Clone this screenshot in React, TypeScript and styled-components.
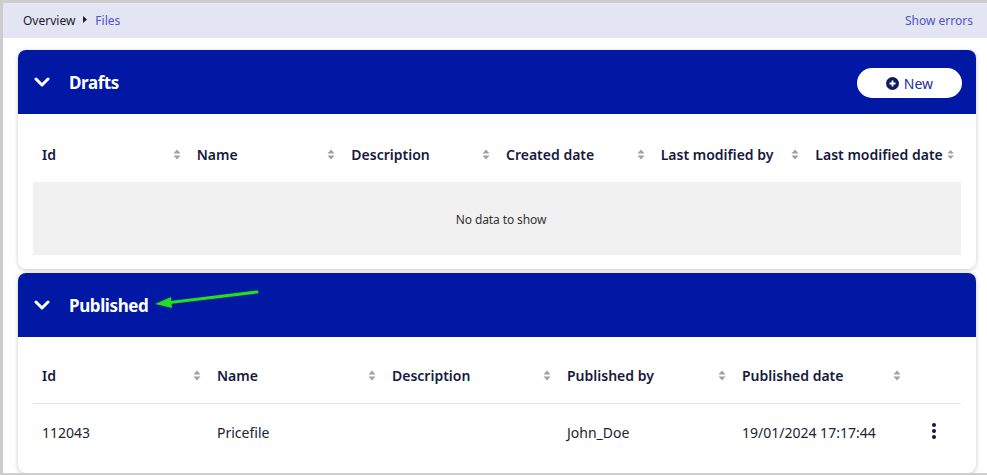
import React from "react";
import styled, { createGlobalStyle } from "styled-components";

const GlobalStyle = createGlobalStyle`
  html, body { margin: 0; padding: 0; background: #cdcdcd; }
  body { font-family: "Noto Sans", "Open Sans", sans-serif; }
  * { box-sizing: border-box; }
`;

const Frame = styled.div`
  margin: 3px 0 0 3px;
  height: 470px;
  background: #ffffff;
  display: flex;
  flex-direction: column;
  overflow: hidden;
`;

const Breadcrumbs = styled.div`
  height: 35px;
  background: #e3e5f3;
  display: flex;
  align-items: center;
  justify-content: space-between;
  padding: 0 14px 0 20px;
  font-size: 12px;
`;

const Crumbs = styled.div`
  display: flex;
  align-items: center;
  gap: 8px;
`;

const Crumb = styled.span<{ $active?: boolean }>`
  color: ${(p) => (p.$active ? "#4b55c9" : "#1c1c2c")};
`;

const CrumbSep = styled.svg`
  width: 4px;
  height: 7px;
  margin-bottom: 2px;
`;

const LinkText = styled.span`
  color: #4b55c9;
`;

const Content = styled.div`
  padding: 12px 11px 0 15px;
  display: flex;
  flex-direction: column;
  gap: 4px;
`;

const Card = styled.section`
  background: #fff;
  border-radius: 8px;
  box-shadow: 0 1px 4px rgba(0, 0, 0, 0.22);
  overflow: hidden;
`;

const CardHeader = styled.header`
  position: relative;
  height: 64px;
  background: #0018a3;
  display: flex;
  align-items: center;
  padding: 0 14px 0 16px;
  color: #fff;
`;

const Chevron = styled.svg`
  width: 16px;
  height: 10px;
  margin-right: 19px;
`;

const Title = styled.h2`
  margin: 0;
  font-size: 17px;
  font-weight: 700;
  flex: 1;
  letter-spacing: -0.4px;
`;

const NewButton = styled.button`
  height: 30px;
  width: 105px;
  border: none;
  border-radius: 15px;
  background: #fff;
  color: #1f2d9c;
  font-family: inherit;
  font-size: 14px;
  display: flex;
  align-items: center;
  justify-content: center;
  gap: 5px;
  padding: 0;
  margin-top: 2px;
  cursor: pointer;
`;

const CardBody = styled.div<{ $top: number; $bottom: number }>`
  padding: ${(p) => p.$top}px 15px ${(p) => p.$bottom}px;
`;

const GridRow = styled.div<{ $cols: string; $border?: boolean }>`
  display: grid;
  grid-template-columns: ${(p) => p.$cols};
  height: 56px;
  align-items: center;
  border-bottom: ${(p) => (p.$border ? "1px solid #e3e3e3" : "none")};
`;

const HeadCell = styled.div`
  display: flex;
  align-items: center;
  justify-content: space-between;
  gap: 4px;
  padding: 0 7px 0 9px;
  font-size: 14px;
  font-weight: 600;
  color: #161a3d;
  white-space: nowrap;
  min-width: 0;
`;

const Cell = styled.div<{ $center?: boolean }>`
  padding: 0 9px;
  font-size: 14px;
  color: #22232e;
  white-space: nowrap;
  display: flex;
  justify-content: ${(p) => (p.$center ? "center" : "flex-start")};
`;

const Empty = styled.div`
  height: 73px;
  background: #f1f1f1;
  display: flex;
  align-items: center;
  justify-content: center;
  padding: 2px 0 0 8px;
  font-size: 12px;
  letter-spacing: -0.1px;
  color: #333;
`;

const Kebab = styled.div`
  display: flex;
  flex-direction: column;
  gap: 2px;
  margin: -2px 0 0 -1px;
`;

const Dot = styled.span`
  width: 4px;
  height: 4px;
  border-radius: 50%;
  background: #101846;
`;

const Annotation = styled.svg`
  position: absolute;
  left: 112px;
  top: 10px;
  width: 130px;
  height: 30px;
  pointer-events: none;
`;

const SortIcon = () => (
  <svg width="8" height="11" viewBox="0 0 8 11">
    <path d="M4 0.5 L7.5 4.5 H0.5 Z" fill="#a0a0a0" />
    <path d="M4 10.5 L7.5 6.5 H0.5 Z" fill="#a0a0a0" />
  </svg>
);

const ChevronIcon = () => (
  <Chevron viewBox="0 0 16 10">
    <path d="M2 2 L8 8 L14 2" fill="none" stroke="#fff" strokeWidth="3" strokeLinecap="round" strokeLinejoin="round" />
  </Chevron>
);

const PlusCircle = () => (
  <svg width="13" height="13" viewBox="0 0 13 13">
    <circle cx="6.5" cy="6.5" r="6.5" fill="#101a5c" />
    <path d="M6.5 3.5 V9.5 M3.5 6.5 H9.5" stroke="#fff" strokeWidth="1.8" />
  </svg>
);

const draftCols = ["Id", "Name", "Description", "Created date", "Last modified by", "Last modified date"];
const pubCols = ["Id", "Name", "Description", "Published by", "Published date"];
const pubTemplate = "repeat(5, 175px) 1fr";

export default function App() {
  return (
    <>
      <GlobalStyle />
      <Frame>
        <Breadcrumbs>
          <Crumbs>
            <Crumb>Overview</Crumb>
            <CrumbSep viewBox="0 0 4 7">
              <path d="M0 0 L4 3.5 L0 7 Z" fill="#1c1c2c" />
            </CrumbSep>
            <Crumb $active>Files</Crumb>
          </Crumbs>
          <LinkText>Show errors</LinkText>
        </Breadcrumbs>
        <Content>
          <Card>
            <CardHeader>
              <ChevronIcon />
              <Title>Drafts</Title>
              <NewButton>
                <PlusCircle />
                New
              </NewButton>
            </CardHeader>
            <CardBody $top={12} $bottom={14}>
              <GridRow $cols="repeat(6, 1fr)">
                {draftCols.map((c) => (
                  <HeadCell key={c}>
                    {c}
                    <SortIcon />
                  </HeadCell>
                ))}
              </GridRow>
              <Empty>No data to show</Empty>
            </CardBody>
          </Card>
          <Card>
            <CardHeader>
              <ChevronIcon />
              <Title>Published</Title>
              <Annotation viewBox="0 0 130 30">
                <path d="M127 9 L40 19.5" stroke="#22e01c" strokeWidth="3" strokeLinecap="round" />
                <path d="M25 21 L41 14 L42 25 Z" fill="#22e01c" />
              </Annotation>
            </CardHeader>
            <CardBody $top={11} $bottom={13}>
              <GridRow $cols={pubTemplate} $border>
                {pubCols.map((c) => (
                  <HeadCell key={c}>
                    {c}
                    <SortIcon />
                  </HeadCell>
                ))}
                <HeadCell />
              </GridRow>
              <GridRow $cols={pubTemplate}>
                <Cell>112043</Cell>
                <Cell>Pricefile</Cell>
                <Cell></Cell>
                <Cell>John_Doe</Cell>
                <Cell>19/01/2024 17:17:44</Cell>
                <Cell $center>
                  <Kebab>
                    <Dot />
                    <Dot />
                    <Dot />
                  </Kebab>
                </Cell>
              </GridRow>
            </CardBody>
          </Card>
        </Content>
      </Frame>
    </>
  );
}
